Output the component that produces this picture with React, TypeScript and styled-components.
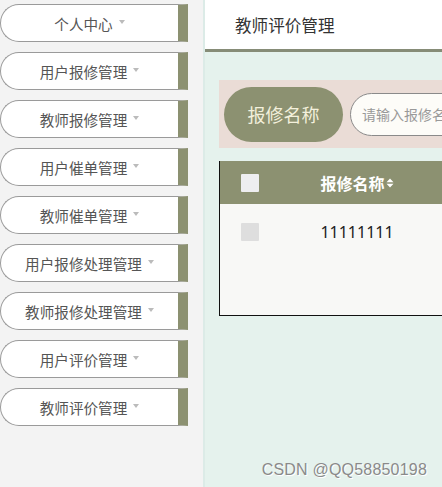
import React from "react";
import styled, { createGlobalStyle } from "styled-components";

const olive = "#8c9171";
const cjk = `"Noto Sans CJK SC", "Noto Sans", sans-serif`;

const GlobalStyle = createGlobalStyle`
    html, body {
        margin: 0;
        padding: 0;
        background: #e5f2ed;
        font-family: ${cjk};
    }
`;

const menuItems = [
    "个人中心",
    "用户报修管理",
    "教师报修管理",
    "用户催单管理",
    "教师催单管理",
    "用户报修处理管理",
    "教师报修处理管理",
    "用户评价管理",
    "教师评价管理",
];

const Layout = styled.div`
    position: relative;
    display: flex;
    width: 442px;
    height: 487px;
    overflow: hidden;
`;

const Sidebar = styled.aside`
    flex: 0 0 203px;
    display: flex;
    flex-direction: column;
    gap: 10px;
    padding-top: 4px;
    background: #f3f3f3;
    border-right: 2px solid #dcebe7;
`;

const MenuItem = styled.div`
    box-sizing: border-box;
    width: 188px;
    height: 38px;
    display: flex;
    align-items: center;
    justify-content: center;
    gap: 6px;
    background: #fff;
    border: 1px solid #9a9a9a;
    border-right: 10px solid ${olive};
    border-radius: 19px 0 0 19px;
    color: #555;
    font-size: 14.6px;
`;

const Caret = styled.span`
    width: 0;
    height: 0;
    border-left: 3px solid transparent;
    border-right: 3px solid transparent;
    border-top: 4px solid #bbb;
    margin-top: -2px;
`;

const Main = styled.main`
    flex: 1;
    display: flex;
    flex-direction: column;
    min-width: 0;
`;

const Header = styled.header`
    height: 49px;
    display: flex;
    align-items: center;
    padding-left: 30px;
    background: #fff;
    border-bottom: 3px solid #868c77;
    font-size: 16.6px;
    color: #333;
`;

const Content = styled.div`
    padding: 28px 0 0 14px;
`;

const SearchBar = styled.div`
    display: flex;
    align-items: center;
    gap: 7px;
    height: 68px;
    padding: 0 5px;
    width: 400px;
    background: #eadcd6;
`;

const SearchLabel = styled.div`
    flex: 0 0 119px;
    height: 55px;
    border-radius: 28px;
    background: ${olive};
    color: #f3f0dc;
    font-size: 18px;
    display: flex;
    align-items: center;
    justify-content: center;
`;

const SearchInput = styled.div`
    flex: 0 0 200px;
    box-sizing: border-box;
    height: 43px;
    border: 1px solid #8a8a8a;
    border-radius: 22px;
    background: #fdfcf8;
    color: #999;
    font-size: 14px;
    display: flex;
    align-items: center;
    padding-left: 11px;
`;

const Table = styled.div`
    margin-top: 13px;
    width: 400px;
    border-left: 1px solid #111;
    border-bottom: 1px solid #111;
`;

const Row = styled.div<{ $head?: boolean }>`
    display: grid;
    grid-template-columns: 62px 150px 1fr;
    align-items: center;
    height: ${(p) => (p.$head ? "43px" : "56px")};
    background: ${(p) => (p.$head ? olive : "transparent")};
    color: ${(p) => (p.$head ? "#fff" : "#222")};
    font-weight: ${(p) => (p.$head ? 700 : 400)};
    font-size: 16px;
`;

const Body = styled.div`
    height: 111px;
    background: #f8f8f6;
`;

const Check = styled.span<{ $light?: boolean }>`
    width: 18px;
    height: 18px;
    margin-left: 21px;
    background: ${(p) => (p.$light ? "#eeeef0" : "#dedede")};
    border-radius: 1px;
`;

const Cell = styled.span<{ $num?: boolean }>`
    display: flex;
    align-items: center;
    justify-content: center;
    font-family: ${(p) => (p.$num ? `"Noto Sans", sans-serif` : cjk)};
`;

const SortIcon = () => (
    <svg width="8" height="10" viewBox="0 0 8 10" style={{ marginLeft: 1 }}>
        <path d="M4 0.5 L7.5 4.3 H0.5 Z M4 9.5 L7.5 5.7 H0.5 Z" fill="#fff" />
    </svg>
);

const Watermark = styled.div`
    position: absolute;
    right: 15px;
    bottom: 8px;
    font-family: "Liberation Sans", Arial, sans-serif;
    font-size: 16px;
    color: #8a8a8a;
    text-shadow: 1px 1px 0 #fff;
    letter-spacing: 0.2px;
`;

export default function App() {
    return (
        <Layout>
            <GlobalStyle />
            <Sidebar>
                {menuItems.map((item) => (
                    <MenuItem key={item}>
                        {item}
                        <Caret />
                    </MenuItem>
                ))}
            </Sidebar>
            <Main>
                <Header>教师评价管理</Header>
                <Content>
                    <SearchBar>
                        <SearchLabel>报修名称</SearchLabel>
                        <SearchInput>请输入报修名称</SearchInput>
                    </SearchBar>
                    <Table>
                        <Row $head>
                            <Check $light />
                            <Cell>
                                报修名称
                                <SortIcon />
                            </Cell>
                        </Row>
                        <Body>
                            <Row>
                                <Check />
                                <Cell $num>11111111</Cell>
                            </Row>
                        </Body>
                    </Table>
                </Content>
            </Main>
            <Watermark>CSDN @QQ58850198</Watermark>
        </Layout>
    );
}
